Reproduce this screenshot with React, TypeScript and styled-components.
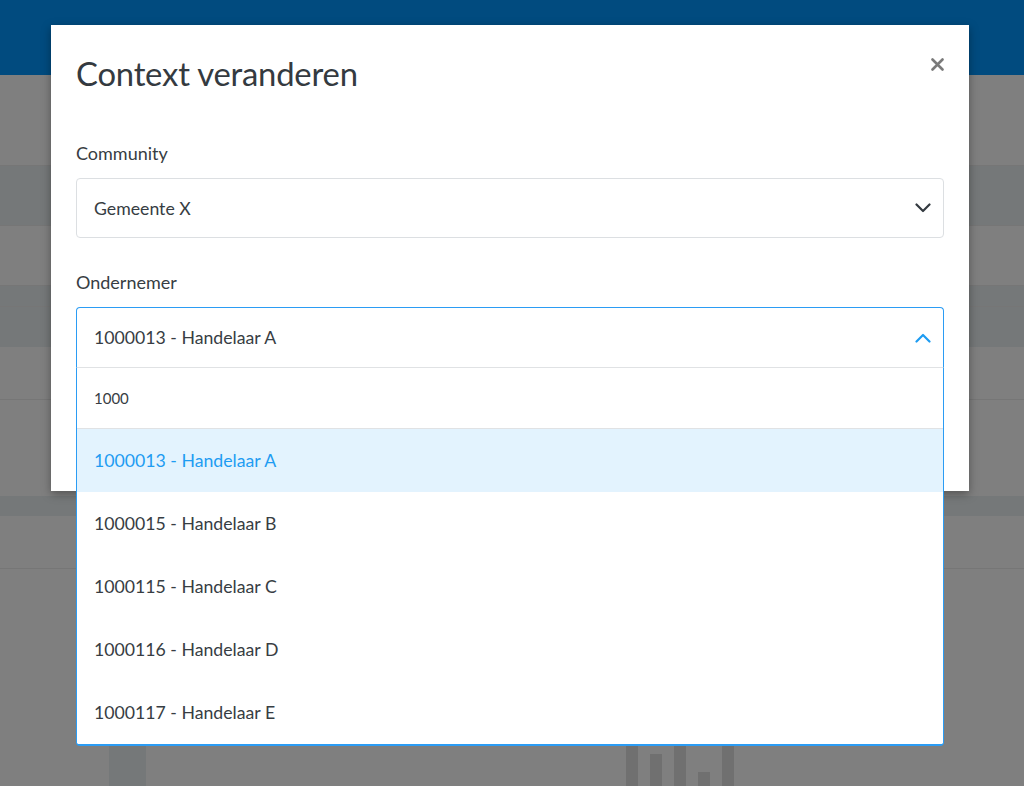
import React from "react";
import styled, { createGlobalStyle } from "styled-components";

const GlobalStyle = createGlobalStyle`
  html, body { margin: 0; padding: 0; }
  body {
    font-family: "Lato", "Noto Sans", sans-serif;
    color: #373d43;
    background: #ffffff;
  }
  * { box-sizing: border-box; }
`;

const Page = styled.div`
  position: relative;
  width: 1024px;
  height: 786px;
  overflow: hidden;
  background: #ffffff;
  display: flex;
  flex-direction: column;
`;

const TopBar = styled.header`
  height: 75px;
  flex: 0 0 75px;
  background: #0296ff;
`;

const Band = styled.div<{ $h: number; $tone?: "light" | "white"; $line?: boolean }>`
  flex: 0 0 ${(p) => p.$h}px;
  height: ${(p) => p.$h}px;
  background: ${(p) => (p.$tone === "light" ? "#eaf0f3" : "#ffffff")};
  border-bottom: ${(p) => (p.$line ? "1px solid #ececec" : "none")};
`;

const ChartArea = styled.div`
  flex: 1;
  position: relative;
  display: flex;
  align-items: flex-end;
  padding-left: 109px;
`;

const SideBar = styled.div`
  width: 37px;
  height: 42px;
  background: #eaf0f3;
`;

const Chart = styled.div`
  margin-left: 480px;
  display: flex;
  align-items: flex-end;
  gap: 12px;
  height: 42px;
`;

const ChartBar = styled.div<{ $h: number }>`
  width: 12px;
  height: ${(p) => p.$h}px;
  background: #e0e0e0;
`;

const Overlay = styled.div`
  position: absolute;
  inset: 0;
  background: rgba(0, 0, 0, 0.5);
`;

const Modal = styled.div`
  position: absolute;
  left: 51px;
  top: 25px;
  width: 918px;
  height: 466px;
  background: #ffffff;
  box-shadow: 0 3px 9px rgba(0, 0, 0, 0.35);
  padding: 29px 25px 0 25px;
  display: flex;
  flex-direction: column;
`;

const ModalHeader = styled.div`
  display: flex;
  justify-content: space-between;
  align-items: flex-start;
`;

const Title = styled.h1`
  margin: 0;
  font-size: 32.8px;
  line-height: 40px;
  font-weight: 400;
  color: #343a40;
  letter-spacing: -0.2px;
`;

const CloseButton = styled.button`
  border: 0;
  background: transparent;
  padding: 0;
  margin: 3px 0 0 0;
  width: 14px;
  height: 14px;
  display: flex;
  align-items: center;
  justify-content: center;
  cursor: pointer;
`;

const Body = styled.div`
  display: flex;
  flex-direction: column;
  padding-top: 47px;
`;

const Label = styled.label<{ $first?: boolean }>`
  display: block;
  font-size: 18px;
  line-height: 24px;
  color: #373d43;
  margin-top: ${(p) => (p.$first ? 0 : 32)}px;
  margin-bottom: 13px;
`;

const SelectWrap = styled.div`
  position: relative;
`;

const SelectBox = styled.div<{ $open?: boolean }>`
  height: ${(p) => (p.$open ? 61 : 60)}px;
  border: 1px solid ${(p) => (p.$open ? "#2b9cf4" : "#dcdfe2")};
  border-bottom: ${(p) => (p.$open ? "1px solid #e0e2e4" : "1px solid #dcdfe2")};
  border-radius: ${(p) => (p.$open ? "4px 4px 0 0" : "4px")};
  display: flex;
  align-items: center;
  justify-content: space-between;
  padding: 0 12px 0 17px;
  font-size: 17.7px;
  color: #373d43;
  background: #fff;
`;

const Menu = styled.div`
  position: absolute;
  top: 100%;
  left: 0;
  right: 0;
  background: #fff;
  border: 1px solid #2b9cf4;
  border-bottom-width: 2px;
  border-top: 0;
  border-radius: 0 0 4px 4px;
  display: flex;
  flex-direction: column;
  overflow: hidden;
  z-index: 2;
`;

const SearchRow = styled.div`
  height: 61px;
  display: flex;
  align-items: center;
  padding: 0 17px;
  font-size: 15px;
  color: #373d43;
  border-bottom: 1px solid #e0e2e4;
`;

const Option = styled.div<{ $active?: boolean }>`
  height: 63px;
  display: flex;
  align-items: center;
  padding: 0 17px;
  font-size: 17.7px;
  color: ${(p) => (p.$active ? "#1e9cf2" : "#373d43")};
  background: ${(p) => (p.$active ? "#e3f3fe" : "#ffffff")};
`;

const Chevron = ({ up, color }: { up?: boolean; color: string }) => (
  <svg width="16" height="10" viewBox="0 0 16 10" fill="none">
    <polyline
      points={up ? "1.5,8.5 8,2 14.5,8.5" : "1.5,1.5 8,8 14.5,1.5"}
      stroke={color}
      strokeWidth="2.2"
      strokeLinecap="round"
      strokeLinejoin="round"
    />
  </svg>
);

const CloseIcon = () => (
  <svg width="13" height="13" viewBox="0 0 13 13">
    <path d="M1.5 1.5 L11.5 11.5 M11.5 1.5 L1.5 11.5" stroke="#7a7a7a" strokeWidth="2.6" strokeLinecap="round" />
  </svg>
);

const options = [
  "1000013 - Handelaar A",
  "1000015 - Handelaar B",
  "1000115 - Handelaar C",
  "1000116 - Handelaar D",
  "1000117 - Handelaar E",
];

export default function App() {
  return (
    <>
      <GlobalStyle />
      <Page>
        <TopBar />
        <Band $h={91} $line />
        <Band $h={60} $tone="light" $line />
        <Band $h={60} $line />
        <Band $h={21} $tone="light" $line />
        <Band $h={40} $tone="light" />
        <Band $h={53} $line />
        <Band $h={96} />
        <Band $h={20} $tone="light" />
        <Band $h={53} $line />
        <ChartArea>
          <SideBar />
          <Chart>
            <ChartBar $h={42} />
            <ChartBar $h={32} />
            <ChartBar $h={42} />
            <ChartBar $h={14} />
            <ChartBar $h={42} />
          </Chart>
        </ChartArea>
        <Overlay />
        <Modal>
          <ModalHeader>
            <Title>Context veranderen</Title>
            <CloseButton aria-label="Sluiten">
              <CloseIcon />
            </CloseButton>
          </ModalHeader>
          <Body>
            <Label $first>Community</Label>
            <SelectBox>
              <span>Gemeente X</span>
              <Chevron color="#343a40" />
            </SelectBox>
            <Label>Ondernemer</Label>
            <SelectWrap>
              <SelectBox $open>
                <span>1000013 - Handelaar A</span>
                <Chevron up color="#1e9cf2" />
              </SelectBox>
              <Menu>
                <SearchRow>1000</SearchRow>
                {options.map((o, i) => (
                  <Option key={o} $active={i === 0}>
                    {o}
                  </Option>
                ))}
              </Menu>
            </SelectWrap>
          </Body>
        </Modal>
      </Page>
    </>
  );
}
